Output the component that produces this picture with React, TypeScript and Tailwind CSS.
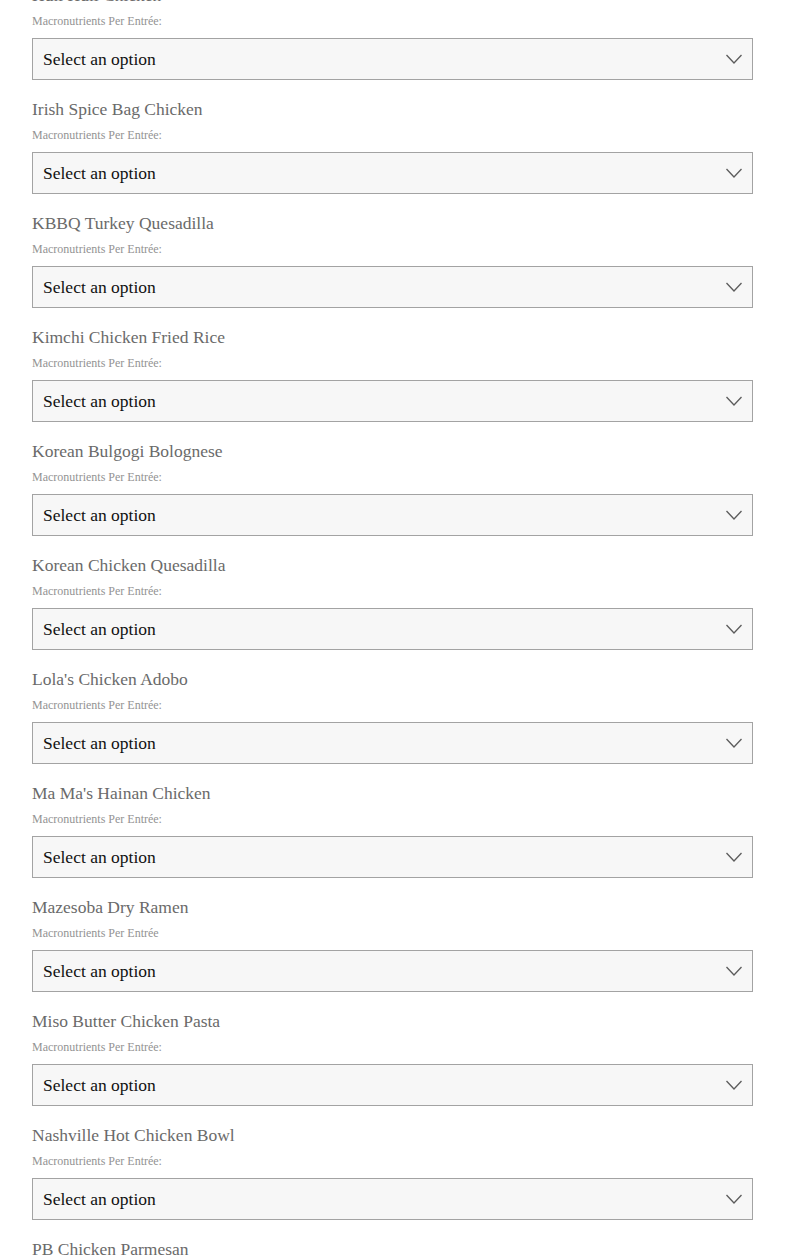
const entrees: { name: string; label: string }[] = [
  { name: "Huli Huli Chicken", label: "Macronutrients Per Entrée:" },
  { name: "Irish Spice Bag Chicken", label: "Macronutrients Per Entrée:" },
  { name: "KBBQ Turkey Quesadilla", label: "Macronutrients Per Entrée:" },
  { name: "Kimchi Chicken Fried Rice", label: "Macronutrients Per Entrée:" },
  { name: "Korean Bulgogi Bolognese", label: "Macronutrients Per Entrée:" },
  { name: "Korean Chicken Quesadilla", label: "Macronutrients Per Entrée:" },
  { name: "Lola's Chicken Adobo", label: "Macronutrients Per Entrée:" },
  { name: "Ma Ma's Hainan Chicken", label: "Macronutrients Per Entrée:" },
  { name: "Mazesoba Dry Ramen", label: "Macronutrients Per Entrée" },
  { name: "Miso Butter Chicken Pasta", label: "Macronutrients Per Entrée:" },
  { name: "Nashville Hot Chicken Bowl", label: "Macronutrients Per Entrée:" },
  { name: "PB Chicken Parmesan", label: "Macronutrients Per Entrée:" },
];

function EntreeField({ name, label }: { name: string; label: string }) {
  return (
    <div className="mb-[18px]">
      <h3 className="text-[17.5px] leading-[22px] text-[#6a6a6a]">{name}</h3>
      <p className="mt-[7px] text-[12px] leading-[16px] text-[#939393]">{label}</p>
      <div className="relative mt-[9px]">
        <select className="block h-[42px] w-full appearance-none border border-[#a3a3a3] bg-[#f7f7f7] pl-[10px] pr-10 font-['Liberation_Serif',serif] text-[17.5px] text-[#111111] outline-none">
          <option>Select an option</option>
        </select>
        {/* chevron */}
        <svg
          className="pointer-events-none absolute right-[10px] top-[15px] h-[12px] w-[18px] text-[#5c5c5c]"
          viewBox="0 0 18 12"
          fill="none"
          stroke="currentColor"
        >
          <path d="M1.5 2l7.5 8 7.5-8" strokeWidth={1.3} />
        </svg>
      </div>
    </div>
  );
}

export default function App() {
  return (
    <div className="min-h-screen overflow-hidden bg-white font-['Liberation_Serif',serif]">
      <div className="-mt-4 px-8" style={{ width: 785 }}>
        {entrees.map((e) => (
          <EntreeField key={e.name} name={e.name} label={e.label} />
        ))}
      </div>
    </div>
  );
}
